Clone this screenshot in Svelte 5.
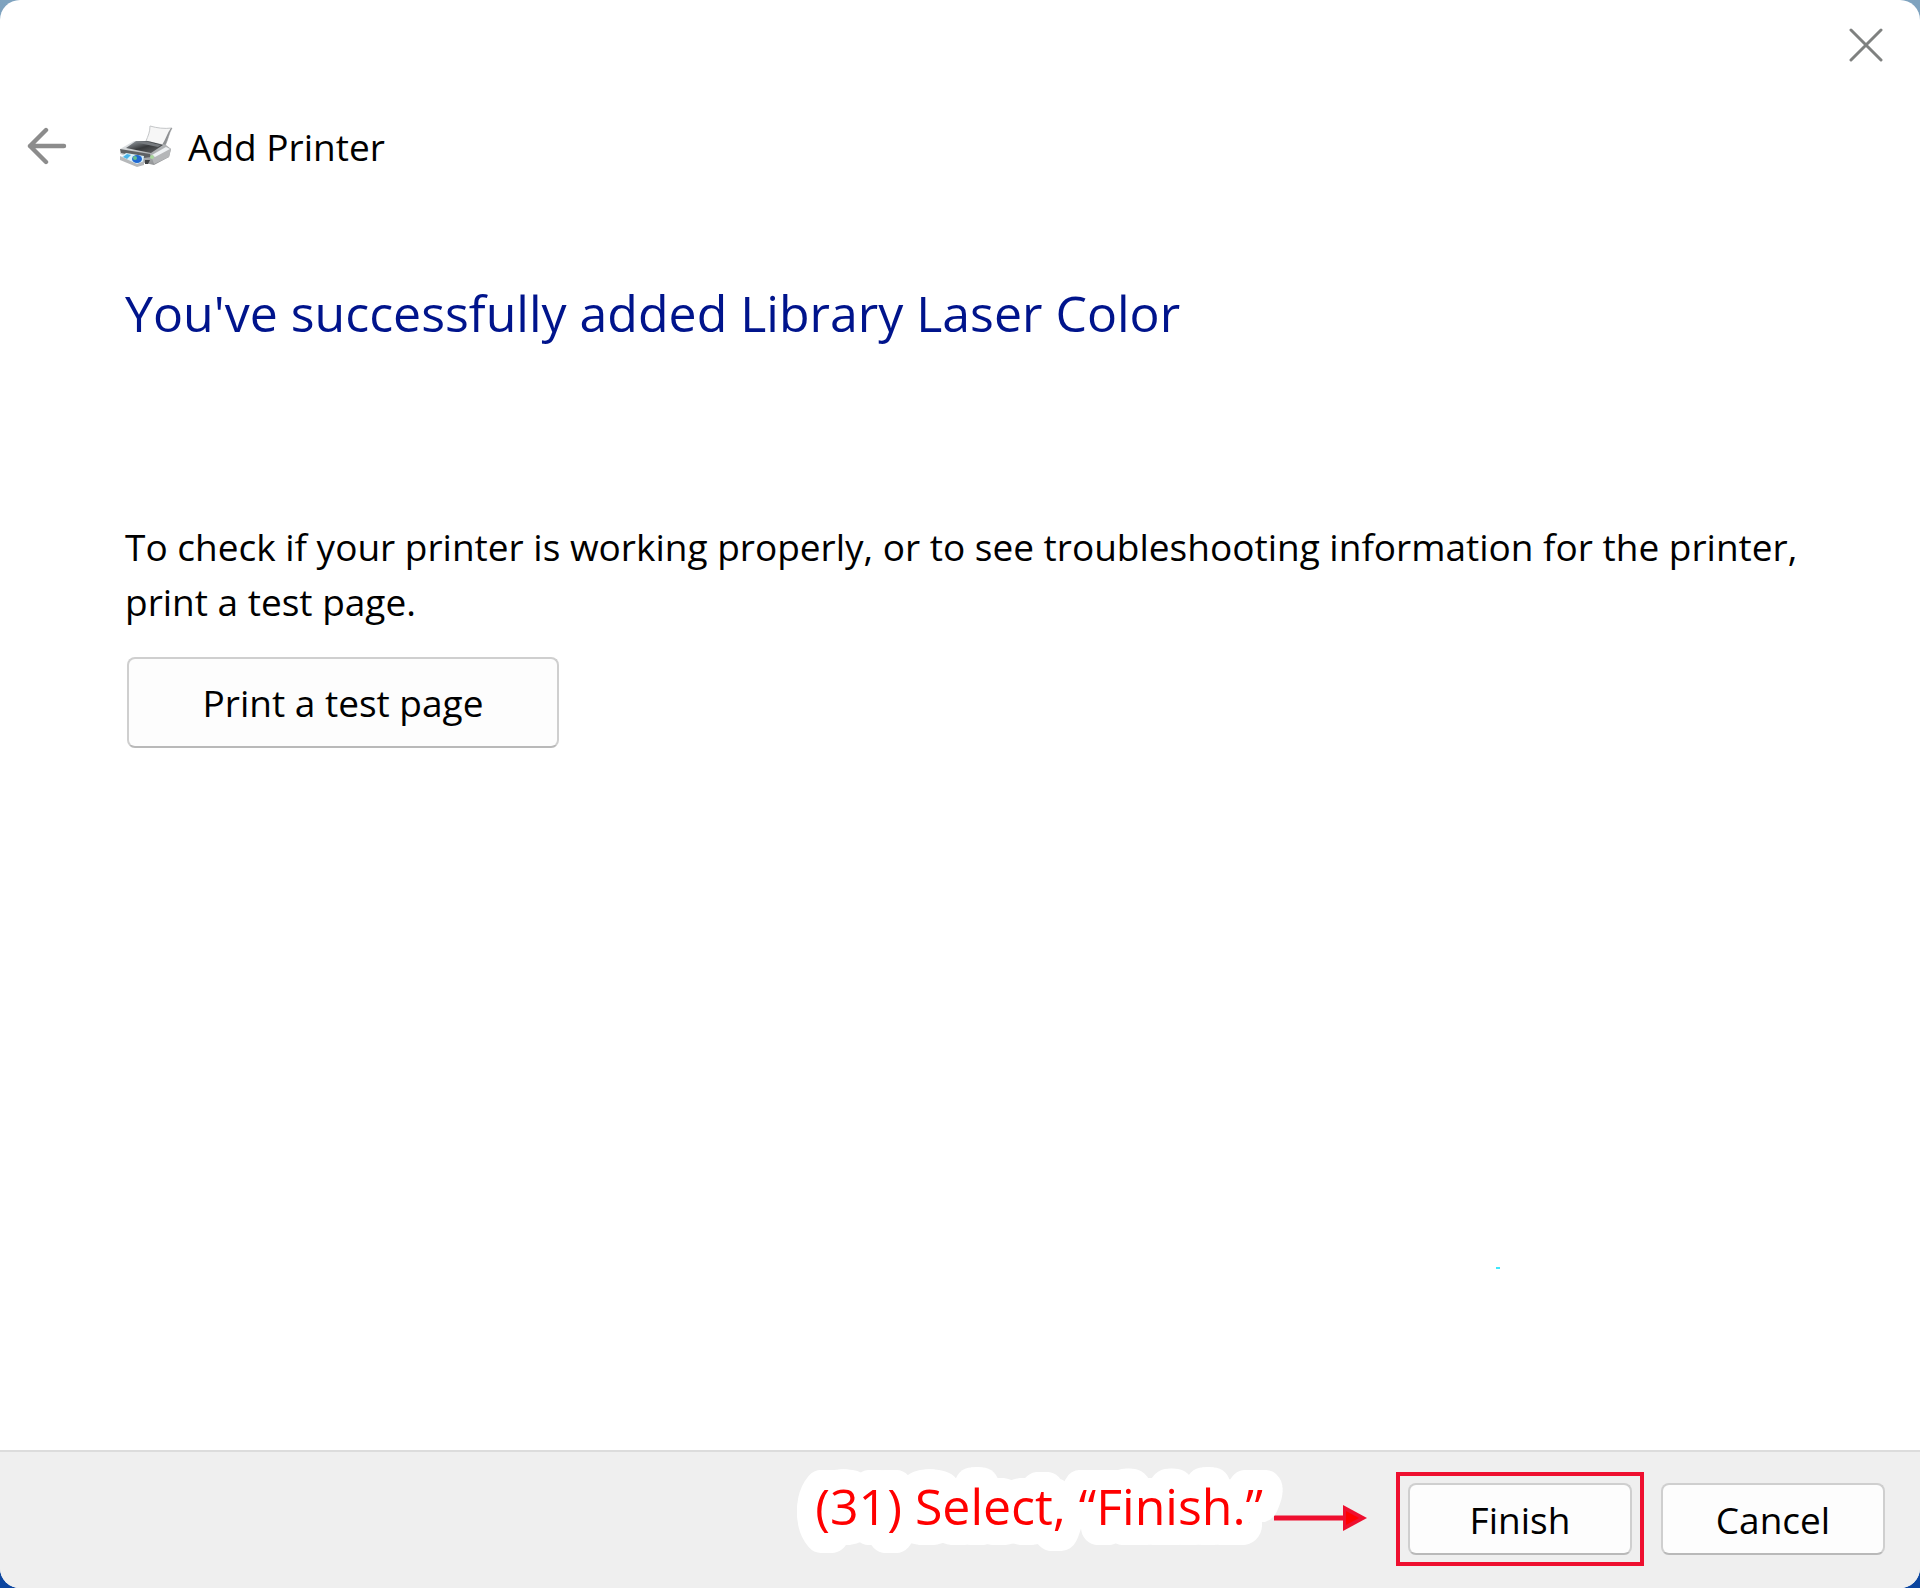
<script>
    let title = "Add Printer";
    let printer = "Library Laser Color";
    let note = "(31) Select, “Finish.”";
</script>

<div class="window">
    <header class="titlebar">
        <button class="icon-button" aria-label="Close">
            <svg width="34" height="34" viewBox="0 0 34 34">
                <path d="M2 2 L32 32 M32 2 L2 32" fill="none" stroke="#7f8180" stroke-width="3" stroke-linecap="round" />
            </svg>
        </button>
    </header>

    <div class="caption">
        <button class="icon-button" aria-label="Back">
            <svg width="42" height="38" viewBox="0 0 42 38">
                <path d="M20 3 L4 19 L20 35 M4 19 H38" fill="none" stroke="#8c8c8c" stroke-width="4.4" stroke-linecap="round" stroke-linejoin="round" />
            </svg>
        </button>
        <svg class="printer" width="54" height="44" viewBox="0 0 54 44" aria-hidden="true">
            <defs>
                <linearGradient id="lid" x1="0" y1="0" x2="1" y2="1">
                    <stop offset="0" stop-color="#a4abb2" />
                    <stop offset="0.5" stop-color="#37393b" />
                    <stop offset="1" stop-color="#6a6c6e" />
                </linearGradient>
                <linearGradient id="side" x1="0" y1="0" x2="1" y2="1">
                    <stop offset="0" stop-color="#eef1f3" />
                    <stop offset="0.5" stop-color="#b3b6b8" />
                    <stop offset="1" stop-color="#7d7f81" />
                </linearGradient>
            </defs>
            <path d="M31 2 C38 4 45 5 53 4 C50 9 49 16 46 22 L27 17 C29 12 31 8 31 2 Z" fill="#f6f6f6" stroke="#c4c6c8" />
            <path d="M53 4 C50 9 49 16 46 22 L43 21 C47 15 48 9 52 4 Z" fill="#8f9193" />
            <path d="M1 25 L15 17 L29 17 L47 21 L52 25 L50 33 L35 41 L26 39 L1 30 Z" fill="url(#side)" />
            <path d="M7 24 L17 17 L29 17 L44 21 L32 29 Z" fill="url(#lid)" />
            <path d="M15 18 L29 18 L42 21 L39 23 Z" fill="#777b7f" />
            <path d="M32 31 L47 22 L52 25 L50 33 L35 40 Z" fill="#b4b6b8" />
            <path d="M33 31 L47 23 L51 25 L36 33 Z" fill="#eef1f3" />
            <path d="M1 25 L31 30 L32 33 L25 34 L2 29 Z" fill="#5e6164" />
            <path d="M2 33 L7 29 L25 32 L24 38 L18 42 Z" fill="#d9f1fa" />
            <path d="M4 33 L8 30 L12 31 L8 35 Z" fill="#48b4ea" />
            <ellipse cx="18" cy="35" rx="5" ry="4" fill="#1f68d2" />
            <ellipse cx="16" cy="34" rx="2" ry="2" fill="#62c08e" />
            <path d="M1 32 L18 40 L25 37 L25 41 L18 43 L1 36 Z" fill="#b6b8ba" />
            <circle cx="33" cy="33" r="2" fill="#a9d79c" />
            <path d="M26 36 L31 36 L29 40 L26 40 Z" fill="#404244" />
        </svg>
        <span class="title">{title}</span>
    </div>

    <main>
        <h1>You've successfully added {printer}</h1>
        <p>
            To check if your printer is working properly, or to see troubleshooting information for the printer,
            print a test page.
        </p>
        <button class="push wide">Print a test page</button>
        <span class="speck"></span>
    </main>

    <footer>
        <div class="note">
            <svg class="note-text" width="450" height="60" viewBox="0 0 450 60">
                <text x="449" y="36" text-anchor="end">{note}</text>
            </svg>
            <svg width="94" height="28" viewBox="0 0 94 28" aria-hidden="true">
                <path d="M0 13 H70" stroke="#ee0f2f" stroke-width="5" />
                <path d="M69 0 L93 13 L69 26 Z" fill="#ee0f2f" />
                <path d="M72 6 L85 13 L72 20 Z" fill="#ff0000" />
            </svg>
        </div>
        <div class="highlight">
            <button class="push">Finish</button>
        </div>
        <button class="push">Cancel</button>
    </footer>
</div>

<style>
    :global(body) {
        margin: 0;
        background: linear-gradient(#7fa3bf, #0b459f);
    }
    .window {
        min-height: 100vh;
        display: flex;
        flex-direction: column;
        overflow: hidden;
        border-radius: 20px;
        background: #fff;
        color: #000;
        font-family: "Open Sans", "Noto Sans", sans-serif;
        font-size: 37px;
    }
    button {
        font: inherit;
        color: inherit;
    }
    .icon-button {
        display: flex;
        padding: 0;
        border: none;
        background: none;
    }
    .titlebar {
        display: flex;
        justify-content: flex-end;
        padding: 28px 37px;
    }
    .caption {
        display: flex;
        align-items: center;
        height: 60px;
        padding: 26px 26px 0;
    }
    .printer {
        margin-left: 51px;
    }
    .title {
        margin-left: 15px;
    }
    main {
        flex: 1;
        position: relative;
        padding: 100px 100px 40px 125px;
    }
    h1 {
        margin: 0;
        color: #00148c;
        font-size: 50px;
        font-weight: 400;
        line-height: 74px;
    }
    p {
        margin: 169px 0 28px;
        line-height: 55px;
    }
    .push {
        width: 224px;
        height: 72px;
        padding: 0;
        border: 2px solid #cfcfcf;
        border-bottom-color: #b9b9b9;
        border-radius: 8px;
        background: #fdfdfd;
    }
    .wide {
        width: 432px;
        height: 91px;
        margin-left: 2px;
    }
    .speck {
        position: absolute;
        right: 420px;
        bottom: 181px;
        width: 4px;
        height: 2px;
        background: #3fe6fb;
    }
    footer {
        display: flex;
        align-items: center;
        justify-content: flex-end;
        padding: 20px 35px 22px;
        border-top: 2px solid #dcdcdc;
        background: #efefef;
    }
    .note {
        display: flex;
        align-items: center;
        gap: 10px;
        margin-right: 28px;
    }
    /* the shadows widen the outline and close the gaps inside it */
    .note-text {
        overflow: visible;
        fill: #ff0000;
        stroke: #fff;
        stroke-width: 34px;
        stroke-linejoin: round;
        paint-order: stroke;
        font-size: 50px;
        filter: drop-shadow(3px 0 0 #fff) drop-shadow(-3px 0 0 #fff) drop-shadow(0 3px 0 #fff) drop-shadow(0 -3px 0 #fff);
    }
    .highlight {
        padding: 7px 8px;
        margin-right: 17px;
        border: 4px solid #ee0f2f;
    }
</style>
